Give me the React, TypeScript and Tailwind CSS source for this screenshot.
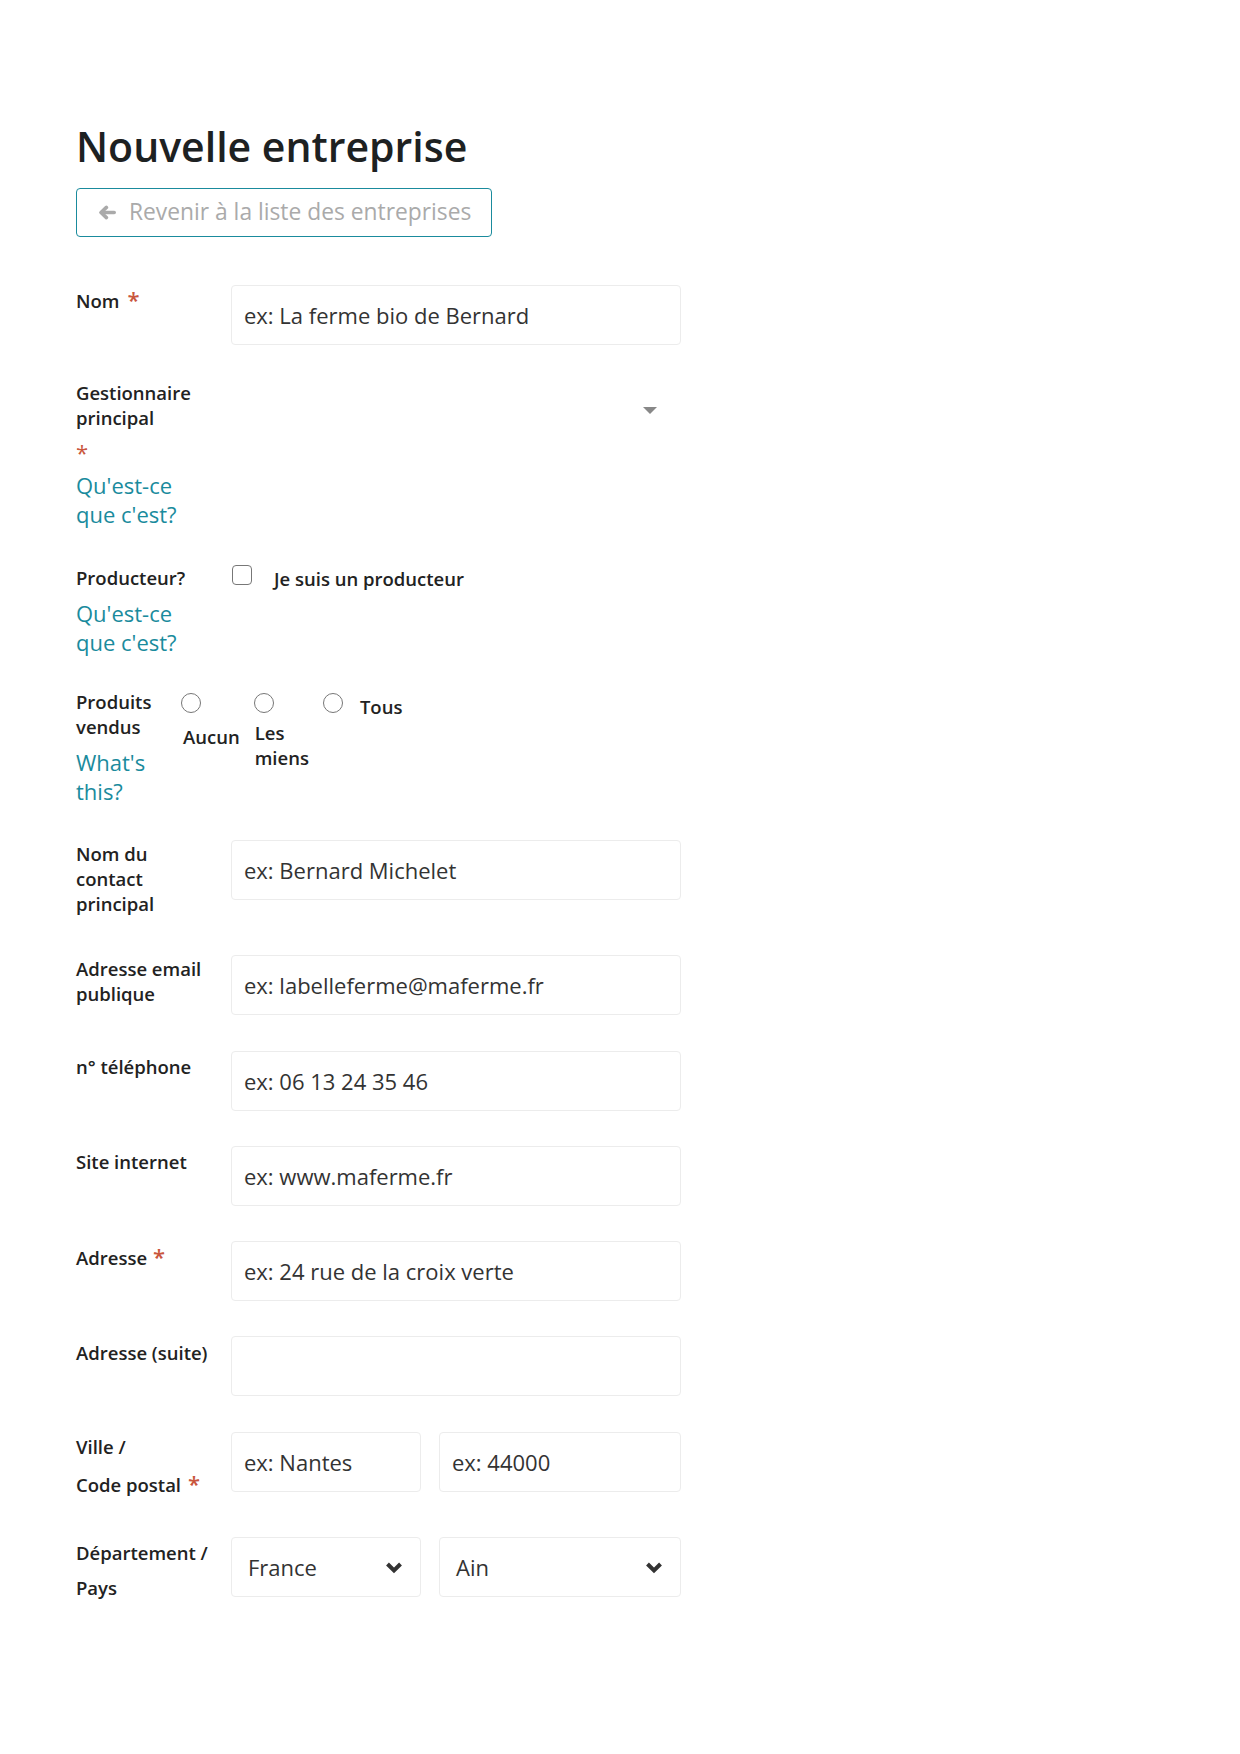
import React from "react";

function Star({ className }: { className?: string }) {
  return <span className={"text-[22px] leading-none text-[#c9563d] " + (className ?? "")}>*</span>;
}

function Label({ children, className }: { children: React.ReactNode; className?: string }) {
  return (
    <div className={"text-[18.5px] font-semibold leading-[25px] text-[#222] " + (className ?? "pt-[3px]")}>
      {children}
    </div>
  );
}

function TextInput({ placeholder, className }: { placeholder?: string; className?: string }) {
  return (
    <input
      type="text"
      placeholder={placeholder}
      className={
        "h-[60px] rounded-[4px] border border-[#ececec] bg-white px-[12px] text-[22px] text-[#222] outline-none placeholder:text-[#333] " +
        (className ?? "w-full")
      }
    />
  );
}

function Chevron() {
  return (
    <svg width="18" height="13" viewBox="0 0 18 13" aria-hidden="true">
      <path d="M2.5 3 L9 9.5 L15.5 3" fill="none" stroke="#333" strokeWidth="4" strokeLinejoin="miter" />
    </svg>
  );
}

function SelectBox({ value, className }: { value: string; className?: string }) {
  return (
    <div
      className={
        "flex h-[60px] items-center justify-between rounded-[4px] border border-[#ececec] bg-white pl-[16px] pr-[17px] text-[22px] text-[#333] " +
        (className ?? "")
      }
    >
      <span>{value}</span>
      <Chevron />
    </div>
  );
}

function HelpLink({ children, className }: { children: React.ReactNode; className?: string }) {
  return (
    <a href="#" className={"block text-[22px] leading-[29px] text-[#1a8b9d] " + (className ?? "")}>
      {children}
    </a>
  );
}

function Row({ children, className }: { children: React.ReactNode; className?: string }) {
  return <div className={"grid grid-cols-[137px_450px] gap-x-[18px] " + (className ?? "mb-[35px]")}>{children}</div>;
}

function Radio() {
  return <span className="block h-[20px] w-[20px] rounded-full border-[1.5px] border-[#777] bg-white" />;
}

const optText = "text-[18.5px] font-semibold leading-[25px] text-[#222]";

export default function App() {
  return (
    <div className="min-h-[1754px] w-full bg-white font-['Open_Sans',sans-serif] text-[#222]">
      <div className="pl-[76px] pt-[121px]">
        <h1 className="text-[41px] font-semibold leading-[50px] text-[#1d2122]">Nouvelle entreprise</h1>

        <a
          href="#"
          className="mt-[17px] inline-flex h-[49px] items-center gap-[13px] rounded-[4px] border border-[#1a8b9d] pl-[21px] pr-[20px] text-[22.8px] text-[#aaaaaa]"
        >
          <svg width="18" height="15" viewBox="0 0 18 15" aria-hidden="true">
            <path
              d="M8.4 2.4 L3 7.5 L8.4 12.6"
              fill="none"
              stroke="#aaaaaa"
              strokeWidth="3.6"
              strokeLinecap="round"
              strokeLinejoin="round"
            />
            <path d="M3.6 7.5 H16.2" fill="none" stroke="#aaaaaa" strokeWidth="3.6" strokeLinecap="round" />
          </svg>
          <span>Revenir à la liste des entreprises</span>
        </a>

        <form className="mt-[48px]">
          {/* Nom */}
          <Row>
            <Label>
              Nom<Star className="ml-[8px]" />
            </Label>
            <TextInput placeholder="ex: La ferme bio de Bernard" />
          </Row>

          {/* Gestionnaire principal */}
          <Row>
            <div>
              <Label className="pt-[0px]">Gestionnaire principal</Label>
              <div className="mt-[11px] h-[25px] leading-[25px]">
                <Star />
              </div>
              <HelpLink className="mt-[5px]">Qu'est-ce que c'est?</HelpLink>
            </div>
            <div className="flex h-[60px] items-center justify-end pr-[24px]">
              <svg width="14" height="7" viewBox="0 0 14 7" aria-hidden="true">
                <polygon points="0,0 14,0 7,7" fill="#888" />
              </svg>
            </div>
          </Row>

          {/* Producteur */}
          <Row className="mb-[29px]">
            <div>
              <Label className="pt-[1px]">Producteur?</Label>
              <HelpLink className="mt-[9px]">Qu'est-ce que c'est?</HelpLink>
            </div>
            <div className="flex items-start">
              <span className="ml-[1px] mt-[1px] block h-[20px] w-[20px] rounded-[4px] border-[1.5px] border-[#777] bg-white" />
              <span className={"ml-[22px] pt-[2px] " + optText}>Je suis un producteur</span>
            </div>
          </Row>

          {/* Produits vendus */}
          <div className="mb-[34px] flex items-start">
            <div className="w-[105px] shrink-0">
              <Label className="pt-[3px]">Produits vendus</Label>
              <HelpLink className="mt-[9px]">What's this?</HelpLink>
            </div>
            <div className="flex items-start pt-[7px]">
              <div className="flex flex-col items-start">
                <Radio />
                <span className={"ml-[2px] mt-[11px] " + optText}>Aucun</span>
              </div>
              <div className="ml-[14px] flex flex-col items-start">
                <Radio />
                <span className={"ml-[1px] mt-[7px] " + optText}>
                  Les
                  <br />
                  miens
                </span>
              </div>
              <div className="ml-[14px] flex items-start">
                <Radio />
                <span className={"ml-[17px] mt-[1px] " + optText}>Tous</span>
              </div>
            </div>
          </div>

          {/* Nom du contact principal */}
          <Row>
            <Label className="pb-[4px] pt-[1px]">Nom du contact principal</Label>
            <TextInput placeholder="ex: Bernard Michelet" />
          </Row>

          {/* Adresse email publique */}
          <Row className="mb-[36px]">
            <Label className="pt-[1px]">Adresse email publique</Label>
            <TextInput placeholder="ex: labelleferme@maferme.fr" />
          </Row>

          {/* Téléphone */}
          <Row>
            <Label>n° téléphone</Label>
            <TextInput placeholder="ex: 06 13 24 35 46" />
          </Row>

          {/* Site internet */}
          <Row>
            <Label>Site internet</Label>
            <TextInput placeholder="ex: www.maferme.fr" />
          </Row>

          {/* Adresse */}
          <Row>
            <Label className="pt-[4px]">
              Adresse<Star className="ml-[6px]" />
            </Label>
            <TextInput placeholder="ex: 24 rue de la croix verte" />
          </Row>

          {/* Adresse (suite) */}
          <Row className="mb-[36px]">
            <Label className="pt-[4px]">Adresse (suite)</Label>
            <TextInput />
          </Row>

          {/* Ville / Code postal */}
          <Row className="mb-[33px]">
            <div className={"-mt-[4px] text-[18.5px] font-semibold leading-[38px] text-[#222]"}>
              Ville /
              <br />
              Code postal<Star className="ml-[7px]" />
            </div>
            <div className="flex gap-[18px]">
              <TextInput placeholder="ex: Nantes" className="w-[190px] shrink-0" />
              <TextInput placeholder="ex: 44000" className="w-[242px] shrink-0" />
            </div>
          </Row>

          {/* Département / Pays */}
          <Row>
            <div className="-mt-[2px] text-[18.5px] font-semibold leading-[35px] text-[#222]">
              Département /
              <br />
              Pays
            </div>
            <div className="flex gap-[18px]">
              <SelectBox value="France" className="w-[190px] shrink-0" />
              <SelectBox value="Ain" className="w-[242px] shrink-0" />
            </div>
          </Row>
        </form>
      </div>
    </div>
  );
}
